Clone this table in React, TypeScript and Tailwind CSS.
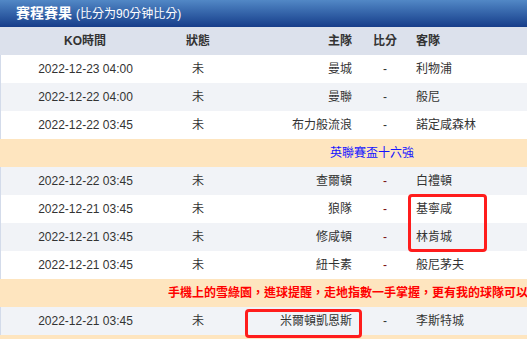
import React from 'react'

interface Match {
  time: string
  status: string
  home: string
  away: string
  scoreColor?: string
}

type Row =
  | { kind: 'match'; m: Match }
  | { kind: 'league'; text: string }
  | { kind: 'ad'; text: string }

const rows: Row[] = [
  { kind: 'match', m: { time: '2022-12-23 04:00', status: '未', home: '曼城', away: '利物浦' } },
  { kind: 'match', m: { time: '2022-12-22 04:00', status: '未', home: '曼聯', away: '般尼' } },
  { kind: 'match', m: { time: '2022-12-22 03:45', status: '未', home: '布力般流浪', away: '諾定咸森林' } },
  { kind: 'league', text: '英聯賽盃十六強' },
  { kind: 'match', m: { time: '2022-12-22 03:45', status: '未', home: '查爾頓', away: '白禮頓', scoreColor: 'text-[#7a1010]' } },
  { kind: 'match', m: { time: '2022-12-21 03:45', status: '未', home: '狼隊', away: '基寧咸', scoreColor: 'text-[#7a1010]' } },
  { kind: 'match', m: { time: '2022-12-21 03:45', status: '未', home: '修咸頓', away: '林肯城', scoreColor: 'text-[#7a1010]' } },
  { kind: 'match', m: { time: '2022-12-21 03:45', status: '未', home: '紐卡素', away: '般尼茅夫', scoreColor: 'text-[#7a1010]' } },
  { kind: 'ad', text: '手機上的雪綠園，進球提醒，走地指數一手掌握，更有我的球隊可以隨時追蹤' },
  { kind: 'match', m: { time: '2022-12-21 03:45', status: '未', home: '米爾頓凱恩斯', away: '李斯特城' } },
  { kind: 'ad', text: '' },
]

export default function App() {
  let stripe = 0
  return (
    <div
      className="h-[339px] w-full overflow-hidden bg-white text-[12px] text-[#333]"
      style={{ fontFamily: '"Liberation Sans", "Noto Sans CJK TC", sans-serif' }}
    >
      <div className="relative w-[744px]">
        {/* 標題 */}
        <div className="flex h-[27px] items-center bg-gradient-to-b from-[#5288c6] to-[#173d8a] pl-4 text-white">
          <span className="text-[14px] font-bold">賽程賽果</span>
          <span className="ml-1 text-[12px]">(比分为90分钟比分)</span>
        </div>

        {/* 表頭 */}
        <div className="flex h-[28px] items-center bg-[#dce1ec] font-bold">
          <div className="w-[170px] text-center">KO時間</div>
          <div className="w-[56px] text-center">狀態</div>
          <div className="w-[134px] pr-2 text-right">主隊</div>
          <div className="w-[50px] text-center">比分</div>
          <div className="flex-1 pl-1.5">客隊</div>
        </div>

        {rows.map((r, i) => {
          if (r.kind === 'league') {
            return (
              <div key={i} className="flex h-[28px] items-center justify-center bg-[#fee5bf] text-[#1414ff]">
                {r.text}
              </div>
            )
          }
          if (r.kind === 'ad') {
            return (
              <div key={i} className="flex h-[28px] items-center justify-center bg-[#fee5bf] font-bold text-[#ff0000]">
                {r.text}
              </div>
            )
          }
          const bg = stripe++ % 2 === 0 ? 'bg-white' : 'bg-[#f1f3f7]'
          const m = r.m
          return (
            <div key={i} className={`flex h-[28px] items-center border-l border-[#d3dbea] ${bg}`}>
              <div className="w-[169px] text-center">{m.time}</div>
              <div className="w-[56px] text-center">{m.status}</div>
              <div className="w-[134px] pr-2 text-right">{m.home}</div>
              <div className={`w-[50px] text-center ${m.scoreColor ?? ''}`}>-</div>
              <div className="flex-1 pl-1.5">{m.away}</div>
            </div>
          )
        })}

        {/* 紅框標註 */}
        <div className="absolute left-[408px] top-[194px] h-[58px] w-[79px] rounded-[4px] border-[3px] border-[#ff1c1c]" />
        <div className="absolute left-[245px] top-[309px] h-[29px] w-[117px] rounded-[4px] border-[3px] border-[#ff1c1c]" />
      </div>
    </div>
  )
}
